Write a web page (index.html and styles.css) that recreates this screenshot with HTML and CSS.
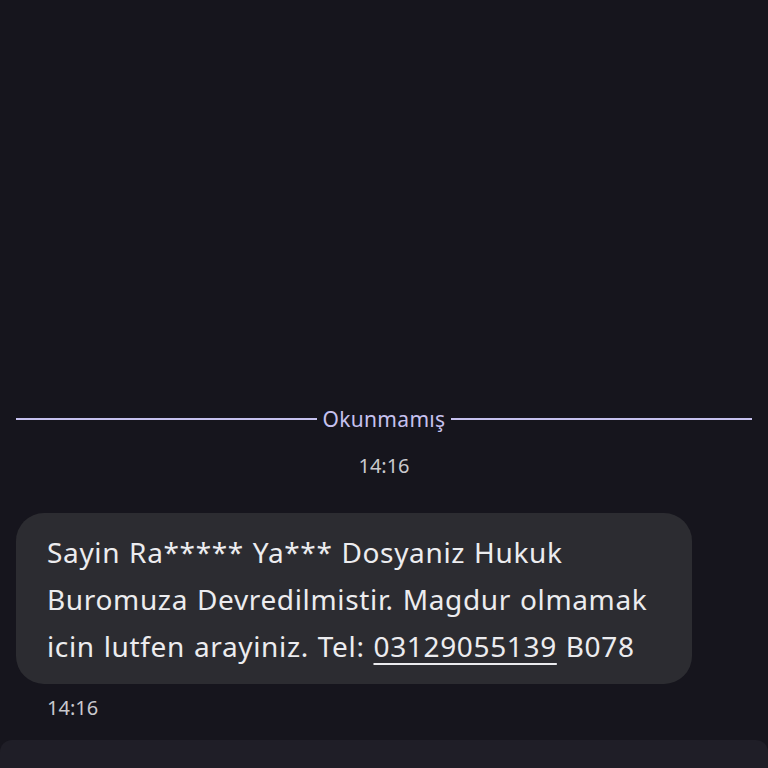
FILE: index.html
```html
<!DOCTYPE html>
<html lang="tr">
<head>
    <meta charset="UTF-8">
    <meta name="viewport" content="width=device-width, initial-scale=1.0">
    <title>Mesajlar</title>
    <link rel="stylesheet" href="styles.css">
</head>
<body>
    <div class="chat">
        <div class="unread">
            <span class="line"></span>
            <span class="label">Okunmamış</span>
            <span class="line"></span>
        </div>
        <div class="stamp">14:16</div>
        <div class="bubble">
            Sayin Ra***** Ya*** Dosyaniz Hukuk<br>
            Buromuza Devredilmistir. Magdur olmamak<br>
            icin lutfen arayiniz. Tel: <span class="tel">03129055139</span> B078
        </div>
        <div class="time">14:16</div>
        <div class="composer"></div>
    </div>
</body>
</html>
```
FILE: styles.css
```css
*{
    box-sizing: border-box;
}
body{
    margin: 0;
    background-color: #16151d;
    font-family: "Noto Sans", Roboto, sans-serif;
}
.chat{
    height: 768px;
    display: flex;
    flex-direction: column;
    justify-content: flex-end;
}
.unread{
    display: flex;
    align-items: center;
    gap: 6px;
    padding: 0 16px;
    height: 24px;
}
.unread .line{
    flex: 1;
    height: 2px;
    background-color: #c6c1ef;
}
.unread .label{
    color: #c6c1ef;
    font-size: 21px;
    letter-spacing: 0.3px;
    line-height: 24px;
}
.stamp{
    margin-top: 23px;
    text-align: center;
    color: #c9c9ce;
    font-size: 20px;
    line-height: 24px;
}
.bubble{
    margin: 35px 0 0 16px;
    width: 676px;
    padding: 16px 10px 14px 31px;
    border-radius: 28px;
    background-color: #2c2c31;
    color: #ececef;
    font-size: 28px;
    letter-spacing: 0.65px;
    word-spacing: 1px;
    line-height: 47px;
    white-space: nowrap;
}
.tel{
    text-decoration: underline;
    text-underline-offset: 6px;
    text-decoration-thickness: 2px;
}
.time{
    margin: 12px 0 0 47px;
    color: #c9c9ce;
    font-size: 20px;
    line-height: 24px;
}
.composer{
    margin-top: 20px;
    height: 28px;
    border-radius: 12px 12px 0 0;
    background-color: #1f1e27;
}
```
